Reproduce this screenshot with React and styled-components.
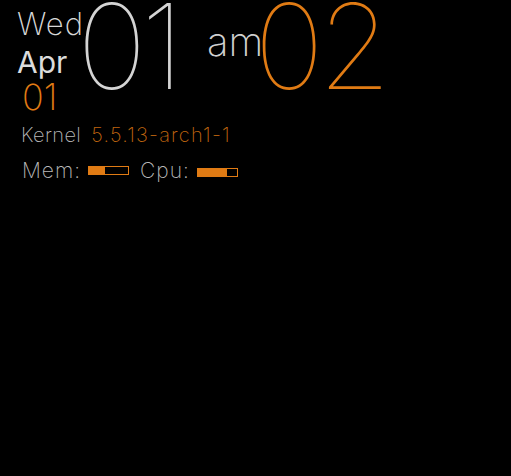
import React from "react";
import styled, { createGlobalStyle } from "styled-components";

const Global = createGlobalStyle`
  html, body { margin: 0; padding: 0; background: #000; }
  body { width: 511px; height: 476px; overflow: hidden; font-family: Inter, "Noto Sans", sans-serif; }
`;

const Widget = styled.div`
  padding: 0 0 0 17px;
  color: #d0d0d0;
`;

const Clock = styled.div`
  display: flex;
  align-items: flex-start;
`;

const DateCol = styled.div`
  display: flex;
  flex-direction: column;
  width: 60px;
`;

const Day = styled.div`
  font-size: 31px;
  font-weight: 200;
  line-height: 1;
  margin-top: 8px;
  letter-spacing: 1px;
  color: #d8d8d8;
`;

const Month = styled.div`
  font-size: 30px;
  font-weight: 400;
  line-height: 1;
  margin-top: 8px;
  color: #dcdcdc;
`;

const DayNum = styled.div`
  font-size: 36px;
  font-weight: 200;
  line-height: 1;
  margin: 2px 0 0 5px;
  color: #e07b14;
`;

const BigNum = styled.div`
  font-size: 118px;
  font-weight: 100;
  line-height: 1;
  margin-top: -13px;
  letter-spacing: -6px;
  color: ${(p) => p.$color};
`;

const Meridiem = styled.div`
  font-size: 40px;
  font-weight: 200;
  line-height: 1;
  margin: 22px -9px 0 29px;
  color: #d0d0d0;
`;

const InfoRow = styled.div`
  display: flex;
  align-items: center;
  gap: ${(p) => p.$gap || 10}px;
  margin: ${(p) => p.$margin};
`;

const Label = styled.span`
  font-size: ${(p) => p.$size || 20}px;
  font-weight: 200;
  letter-spacing: ${(p) => p.$spacing || 0}px;
  color: #b8b8b8;
`;

const Value = styled.span`
  font-size: 20px;
  font-weight: 200;
  letter-spacing: 1.2px;
  color: #c0660f;
`;

const Bar = styled.div`
  width: 39px;
  height: 7px;
  border: 1px solid #e07b14;
  display: flex;
  margin-top: ${(p) => p.$offset || 0}px;
`;

const Fill = styled.div`
  background: #e07b14;
  height: 100%;
`;

const Stat = styled.div`
  display: flex;
  align-items: center;
  gap: 7px;
`;

export default function App() {
  return (
    <>
      <Global />
      <Widget>
        <Clock>
          <DateCol>
            <Day>Wed</Day>
            <Month>Apr</Month>
            <DayNum>01</DayNum>
          </DateCol>
          <BigNum $color="#d4d4d4">01</BigNum>
          <Meridiem>am</Meridiem>
          <BigNum $color="#e07b14">02</BigNum>
        </Clock>
        <InfoRow $gap={10} $margin="8px 0 0 4px">
          <Label $spacing={0.4}>Kernel</Label>
          <Value>5.5.13-arch1-1</Value>
        </InfoRow>
        <InfoRow $gap={11} $margin="11px 0 0 5px">
          <Stat>
            <Label $size={21} $spacing={1}>Mem:</Label>
            <Bar><Fill style={{ width: "40%" }} /></Bar>
          </Stat>
          <Stat>
            <Label $size={21} $spacing={1}>Cpu:</Label>
            <Bar $offset={4}><Fill style={{ width: "75%" }} /></Bar>
          </Stat>
        </InfoRow>
      </Widget>
    </>
  );
}
